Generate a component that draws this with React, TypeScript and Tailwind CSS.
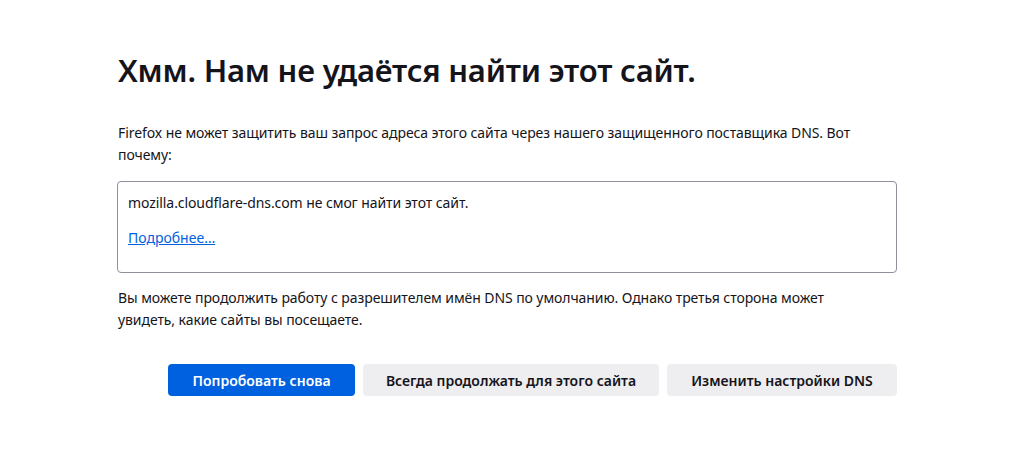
import * as React from "react";

const font = { fontFamily: '"Noto Sans", "Open Sans", sans-serif' };

export default function App() {
  return (
    <div className="min-h-[463px] w-full bg-white text-[#15141a]" style={font}>
      <div className="ml-[118px] w-[779px] pt-[50px]">
        <h1 className="text-[31px] font-semibold leading-[40px] tracking-[-0.2px]">
          Хмм. Нам не удаётся найти этот сайт.
        </h1>
        <p className="mt-[32px] text-[14px] leading-[22px] tracking-[-0.08px]">
          Firefox не может защитить ваш запрос адреса этого сайта через нашего защищенного поставщика DNS. Вот почему:
        </p>
        <div className="-ml-px mt-[15px] h-[92px] rounded-[4px] border border-[#8f8f9d] px-[10px] pt-[10px]">
          <p className="text-[14px] leading-[22px] tracking-[-0.08px]">mozilla.cloudflare-dns.com не смог найти этот сайт.</p>
          <a href="#" className="mt-[13px] block w-fit text-[14px] leading-[22px] text-[#0061e0] underline">
            Подробнее…
          </a>
        </div>
        <p className="mt-[14px] w-[750px] text-[14px] leading-[22px] tracking-[-0.08px]">
          Вы можете продолжить работу с разрешителем имён DNS по умолчанию. Однако третья сторона может увидеть, какие сайты вы посещаете.
        </p>
        <div className="mt-[33px] flex justify-end gap-[8px]">
          <button className="h-[32px] w-[187px] rounded-[4px] bg-[#0061e0] text-[14px] font-semibold text-white">
            Попробовать снова
          </button>
          <button className="h-[32px] w-[296px] rounded-[4px] bg-[#eeeef0] text-[14px] font-semibold">
            Всегда продолжать для этого сайта
          </button>
          <button className="h-[32px] w-[230px] rounded-[4px] bg-[#eeeef0] text-[14px] font-semibold">
            Изменить настройки DNS
          </button>
        </div>
      </div>
    </div>
  );
}
